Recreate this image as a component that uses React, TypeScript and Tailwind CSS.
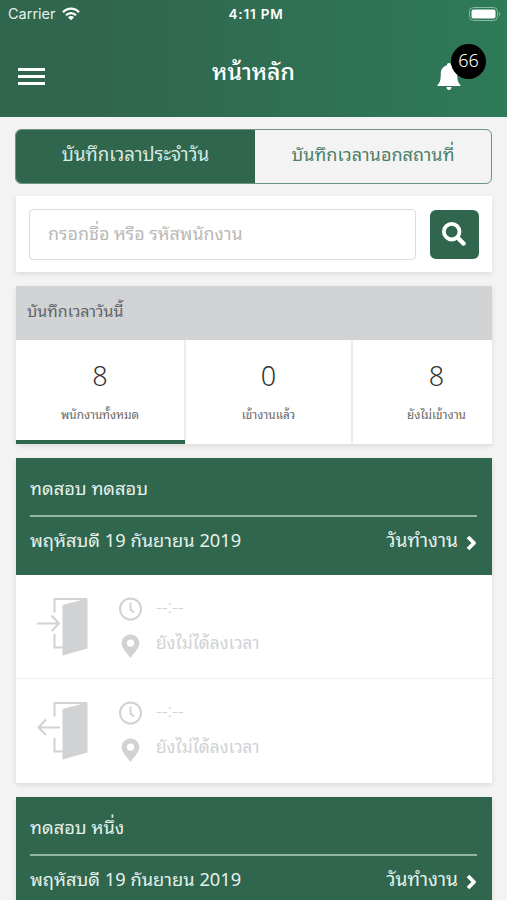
import React from 'react';

type Direction = 'in' | 'out';

interface DoorIconProps {
  direction: Direction;
}

interface AttendanceRecord {
  id: number;
  name: string;
  date: string;
  status: string;
  punches: Direction[];
}

const records: AttendanceRecord[] = [
  { id: 1, name: 'ทดสอบ ทดสอบ', date: 'พฤหัสบดี 19 กันยายน 2019', status: 'วันทำงาน', punches: ['in', 'out'] },
  { id: 2, name: 'ทดสอบ หนึ่ง', date: 'พฤหัสบดี 19 กันยายน 2019', status: 'วันทำงาน', punches: [] },
];

const stats = [
  { value: 8, label: 'พนักงานทั้งหมด', active: true, width: 'w-[170px]' },
  { value: 0, label: 'เข้างานแล้ว', active: false, width: 'w-[167px]' },
  { value: 8, label: 'ยังไม่เข้างาน', active: false, width: 'w-[169px]' },
];

function DoorIcon({ direction }: DoorIconProps) {
  return (
    <svg className="w-[52px] h-[60px] shrink-0" viewBox="0 0 52 60" fill="none" stroke="#d0d2d3" strokeWidth="2">
      <path d="M17.500 15.500V2H50M17.500 37V50.500H26" />
      <path d="M25.500 8L50.500 1.500V51.500L25.500 58.500Z" fill="#d0d2d3" stroke="none" />
      {direction === 'in' ? <path d="M0 26.500H22M14.500 18.500L22 26.500L14.500 34" /> : <path d="M23 26.500H1.500M9 18.500L1.500 26.500L9 34" />}
    </svg>
  );
}

function PunchRow({ direction }: DoorIconProps) {
  return (
    <div className="flex h-[104px] pl-[21px] pt-[22px] border-b border-[#efefef] last:border-b-0 text-[#d0d2d3]">
      <DoorIcon direction={direction} />
      <div className="ml-[29px]">
        <div className="flex items-center h-6">
          <svg className="w-6 h-6" viewBox="0 0 24 24" fill="none" stroke="currentColor" strokeWidth="2">
            <circle cx="12.500" cy="12" r="10.500" />
            <path d="M12.500 5.500V12.500L16 15.500" />
          </svg>
          <span className="ml-[14px] -mt-2 text-[18px] font-light leading-5">--:--</span>
        </div>
        <div className="flex items-center h-6 mt-[13px]">
          <svg className="w-6 h-6" viewBox="0 0 24 24" fill="currentColor">
            <path fillRule="evenodd" d="M12.500 0.500C7.500 0.500 3.700 4.300 3.700 9C3.700 14.500 9 19 12.500 24C16 19 21.300 14.500 21.300 9C21.300 4.300 17.500 0.500 12.500 0.500ZM12.500 5.500A3.600 3.600 0 1 1 12.500 12.700A3.600 3.600 0 1 1 12.500 5.500Z" />
          </svg>
          <span className="ml-[14px] -mt-[10px] text-[17.3px] leading-6 whitespace-nowrap">ยังไม่ได้ลงเวลา</span>
        </div>
      </div>
    </div>
  );
}

export default function App() {
  return (
    <div className="w-[507px] h-[900px] overflow-hidden bg-[#f3f3f3] font-['Noto_Sans_Thai_Looped','Sarabun','Loma','Noto_Sans',sans-serif]">
      {/* Header */}
      <header className="h-[117px] bg-linear-to-r from-[#30664e] from-20% to-[#2e7a59] text-white">
        <div className="grid grid-cols-3 items-center h-7 pl-2 pr-[6px] text-[14.5px] font-['Inter',sans-serif]">
          <div className="flex items-center gap-[6px]">
            <span className="text-[#e5f1eb]">Carrier</span>
            <svg className="w-[18px] h-[14px] -mt-px" viewBox="0 0 18 14" fill="none" stroke="white" strokeWidth="2.300">
              <path d="M1 5.200C5.500 0.400 12.500 0.400 17 5.200M4 8.300C7 5.300 11 5.300 14 8.300" />
              <path d="M5.900 10.200C7.700 8.600 10.300 8.600 12.100 10.200L9 13.200Z" fill="white" stroke="none" />
            </svg>
          </div>
          <span className="text-center font-semibold text-[13.5px] tracking-[0.8px] pl-[3px]">4:11 PM</span>
          <svg className="w-8 h-[14px] -mt-px justify-self-end" viewBox="0 0 32 14">
            <rect x="0.500" y="0.500" width="28" height="13" rx="4" fill="none" stroke="#8ab8a2" />
            <rect x="2.500" y="2.500" width="24" height="9" rx="2" fill="white" />
            <path d="M30 5C31.500 5.500 31.500 8.500 30 9Z" fill="#8ab8a2" />
          </svg>
        </div>
        <div className="grid grid-cols-3 h-[89px] pl-[18px] pr-[18px]">
          <button className="flex flex-col gap-1 pt-10 w-[27px]">
            <span className="h-[3px] w-full bg-white" />
            <span className="h-[3px] w-full bg-white" />
            <span className="h-[3px] w-full bg-white" />
          </button>
          <h1 className="text-center text-[23px] font-medium leading-7 pt-[28px]">หน้าหลัก</h1>
          <div className="relative justify-self-end w-[52px]">
            <svg className="w-[24px] h-[28px] mt-[35px]" viewBox="0 0 24 28" fill="white">
              <path d="M12 0C10.700 0 10 0.900 10 2.300C6 3.300 3.800 6.500 3.800 11C3.800 17 2.800 20.200 0.500 22V23H23.500V22C21.200 20.200 20.200 17 20.200 11C20.200 6.500 18 3.300 14 2.300C14 0.900 13.300 0 12 0ZM9.500 24C9.700 26 10.600 27 12 27S14.300 26 14.500 24Z" />
            </svg>
            <span className="absolute left-[14px] top-4 w-[35px] h-[35px] rounded-full bg-black flex items-center justify-center pb-1 text-[18px] font-light">66</span>
          </div>
        </div>
      </header>

      <main className="px-[15px] pt-3">
        {/* Tabs */}
        <div className="flex h-[55px] rounded-[6px] overflow-hidden border border-[#6e9482] leading-6">
          <button className="w-[239px] pb-[7px] text-[18.7px] bg-[#30664e] text-[#d9ebe2] whitespace-nowrap">บันทึกเวลาประจำวัน</button>
          <button className="flex-1 pb-[7px] text-[18.1px] text-[#4d8068] whitespace-nowrap">บันทึกเวลานอกสถานที่</button>
        </div>

        {/* Search */}
        <div className="flex mt-3 ml-px h-[76px] bg-white shadow-[0_2px_5px_rgba(0,0,0,0.1)] pt-[13px] pl-[13px]">
          <input
            type="text"
            placeholder="กรอกชื่อ หรือ รหัสพนักงาน"
            className="w-[387px] h-[51px] border border-[#dcdcdc] rounded-[4px] pl-[18px] pb-[5px] text-[17.9px] placeholder:text-[#b8b8b8]"
          />
          <button className="ml-[14px] mt-px w-[49px] h-[49px] rounded-[6px] bg-[#30664e] flex items-center justify-center">
            <svg className="w-6 h-6 -mt-px -ml-px" viewBox="0 0 24 24" fill="none" stroke="white" strokeWidth="3.800">
              <circle cx="9.700" cy="9.700" r="7.800" />
              <path d="M16 16L21.500 21.500" strokeWidth="4.500" strokeLinecap="round" />
            </svg>
          </button>
        </div>

        {/* Today summary */}
        <section className="mt-[14px] ml-px h-[158px] bg-white shadow-[0_2px_5px_rgba(0,0,0,0.1)] overflow-hidden">
          <h2 className="h-[54px] bg-[#d1d3d4] pl-[11px] pt-3 text-[16px] leading-6 text-[#606466]">บันทึกเวลาวันนี้</h2>
          <div className="flex h-[104px]">
            {stats.map((s) => (
              <div
                key={s.label}
                className={`${s.width} flex flex-col shrink-0 text-center border-r-2 border-[#ececec]`}
              >
                <div className="pt-[18px] text-[27px] font-light leading-8 text-[#333]">{s.value}</div>
                <div className="text-[11.8px] mt-[14px] leading-5 text-[#666] whitespace-nowrap">{s.label}</div>
                {s.active && <div className="mt-auto -mr-px h-1 bg-[#30664e]" />}
              </div>
            ))}
          </div>
        </section>

        {/* Employee records */}
        {records.map((r) => (
          <article key={r.id} className="mt-[14px] ml-px bg-white shadow-[0_2px_5px_rgba(0,0,0,0.1)]">
            <div className="h-[117px] bg-[#30664e] pl-[14px] pr-[15px] pt-[15px] text-[18.3px] text-[#e5f1eb] leading-7">
              <div className="h-[44px] border-b-2 border-[#92b5a4] whitespace-nowrap">{r.name}</div>
              <div className="flex justify-between mt-[8px]">
                <span className="whitespace-nowrap">{r.date}</span>
                <span className="flex whitespace-nowrap text-[19.2px]">
                  {r.status}
                  <svg className="w-[11px] h-4 ml-2 mt-[10px]" viewBox="0 0 11 16" fill="none" stroke="white" strokeWidth="3.800" strokeLinejoin="round">
                    <path d="M2 2L8 8L2 14" />
                  </svg>
                </span>
              </div>
            </div>
            {r.punches.map((p) => (
              <PunchRow key={p} direction={p} />
            ))}
          </article>
        ))}
      </main>
    </div>
  );
}
